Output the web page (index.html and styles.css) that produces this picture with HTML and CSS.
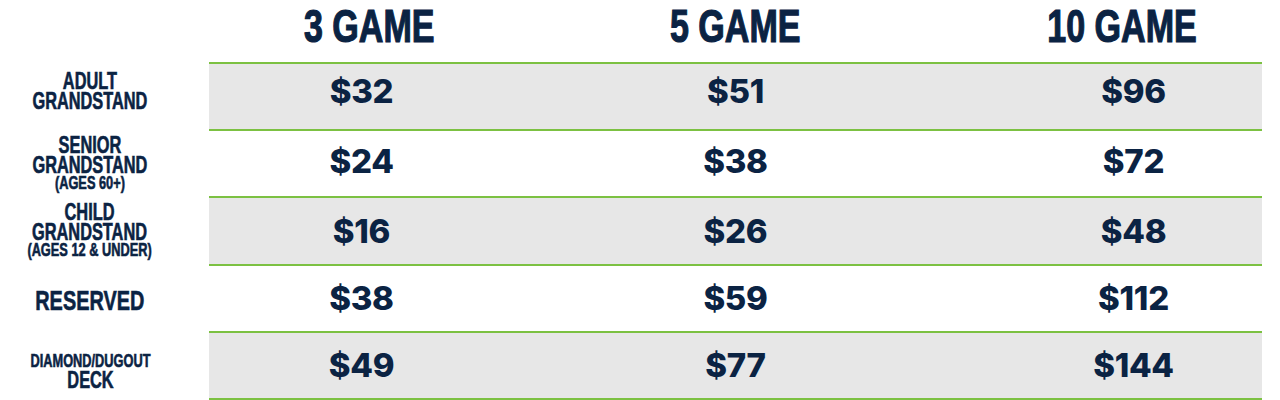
FILE: index.html
```html
<!DOCTYPE html>
<html lang="en">
<head>
<meta charset="utf-8">
<title>Ticket Packages</title>
<link rel="stylesheet" href="styles.css">
</head>
<body>
<div class="page">
  <div class="head-row">
    <div class="label-col"></div>
    <div class="heads">
      <div class="head c1"><span class="sq">3 GAME</span></div>
      <div class="head c2"><span class="sq">5 GAME</span></div>
      <div class="head c3"><span class="sq">10 GAME</span></div>
    </div>
  </div>

  <div class="row r1">
    <div class="label-col lab up"><div class="sq"><div class="big">ADULT<br>GRANDSTAND</div></div></div>
    <div class="band shade">
      <div class="price c1 up">$32</div>
      <div class="price c2 up">$51</div>
      <div class="price c3 up">$96</div>
    </div>
  </div>

  <div class="row r2">
    <div class="label-col lab"><div class="sq"><div class="big">SENIOR<br>GRANDSTAND</div><div class="small">(AGES 60+)</div></div></div>
    <div class="band">
      <div class="price c1 upsm">$24</div>
      <div class="price c2 upsm">$38</div>
      <div class="price c3 upsm">$72</div>
    </div>
  </div>

  <div class="row r3">
    <div class="label-col lab"><div class="sq"><div class="big">CHILD<br>GRANDSTAND</div><div class="small">(AGES 12 &amp; UNDER)</div></div></div>
    <div class="band shade">
      <div class="price c1">$16</div>
      <div class="price c2">$26</div>
      <div class="price c3">$48</div>
    </div>
  </div>

  <div class="row r4">
    <div class="label-col lab down"><div class="sq"><div class="huge">RESERVED</div></div></div>
    <div class="band">
      <div class="price c1">$38</div>
      <div class="price c2">$59</div>
      <div class="price c3">$112</div>
    </div>
  </div>

  <div class="row r5">
    <div class="label-col lab downmore"><div class="sq"><div class="mid">DIAMOND/DUGOUT</div><div class="big">DECK</div></div></div>
    <div class="band shade last">
      <div class="price c1">$49</div>
      <div class="price c2">$77</div>
      <div class="price c3">$144</div>
    </div>
  </div>
</div>
</body>
</html>
```

FILE: styles.css
```css
html, body {
  margin: 0;
  padding: 0;
  background: #ffffff;
}

body {
  width: 1280px;
  height: 400px;
  overflow: hidden;
  color: #0b2343;
}

.page {
  display: flex;
  flex-direction: column;
}

.head-row {
  display: flex;
  height: 62px;
}

.label-col {
  flex: 0 0 209px;
  width: 209px;
  box-sizing: border-box;
  padding-right: 29px;
  display: flex;
  justify-content: center;
  align-items: center;
  text-align: center;
}

.heads {
  flex: 0 0 1053px;
  display: grid;
  grid-template-columns: repeat(3, 1fr);
}

.head {
  display: flex;
  justify-content: center;
  align-items: center;
  padding-bottom: 10px;
  font-family: "Liberation Sans", Arial, sans-serif;
  font-weight: 700;
  font-size: 46px;
  line-height: 1;
  -webkit-text-stroke: 1.2px #0b2343;
}

.head .sq {
  display: inline-block;
  white-space: nowrap;
  transform: scaleX(0.74);
}

.head.c1 { padding-right: 30px; }
.head.c3 { padding-left: 70px; }

.row {
  display: flex;
  height: 67px;
}

.row.r3 { height: 68px; }
.row.r5 { height: 69px; }

.band {
  flex: 0 0 1053px;
  box-sizing: border-box;
  border-top: 2px solid #7cc142;
  display: grid;
  grid-template-columns: repeat(3, 1fr);
  background: #ffffff;
}

.band.shade { background: #e7e7e7; }
.band.last { border-bottom: 2px solid #7cc142; }

.price {
  display: flex;
  justify-content: center;
  align-items: center;
  font-family: "Inter", "Liberation Sans", sans-serif;
  font-weight: 800;
  font-size: 33px;
  line-height: 1;
  letter-spacing: -0.3px;
}

.price.c1 { padding-right: 46px; }
.price.c3 { padding-left: 94px; }
.price.up { padding-bottom: 10px; }
.price.upsm { padding-bottom: 5px; }

.lab {
  font-family: "Liberation Sans", Arial, sans-serif;
  font-weight: 700;
  -webkit-text-stroke: 0.6px #0b2343;
}

.lab.up { padding-bottom: 10px; }
.lab.down { padding-top: 6px; }
.lab.downmore { padding-top: 12px; }

.lab .sq {
  display: flex;
  flex-direction: column;
  align-items: center;
  white-space: nowrap;
  transform: scaleX(0.71);
}

.big {
  font-size: 23px;
  line-height: 20px;
}

.small {
  font-size: 18px;
  line-height: 16px;
}

.mid {
  font-size: 18px;
  line-height: 17px;
}

.huge {
  font-size: 28px;
  line-height: 24px;
}
```
